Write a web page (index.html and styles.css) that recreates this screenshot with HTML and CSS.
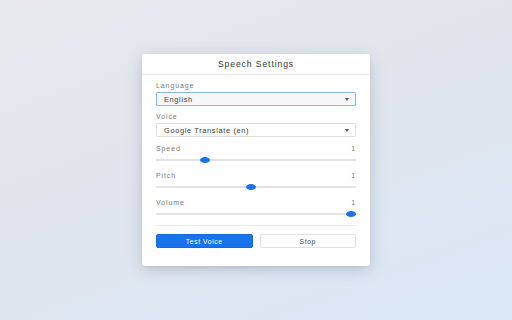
FILE: index.html
```html
<!DOCTYPE html>
<html>
<head>
<meta charset="utf-8">
<link rel="stylesheet" href="styles.css">
</head>
<body>
<div class="stage">
  <div class="card">
    <div class="card-header">Speech Settings</div>
    <div class="card-body">
      <div class="field">
        <div class="label">Language</div>
        <div class="select focused"><span>English</span><span class="caret"></span></div>
      </div>
      <div class="field">
        <div class="label">Voice</div>
        <div class="select"><span>Google Translate (en)</span><span class="caret"></span></div>
      </div>
      <div class="slider-field">
        <div class="label row"><span>Speed</span><span>1</span></div>
        <div class="track"><div class="thumb" style="left: 22%"></div></div>
      </div>
      <div class="slider-field">
        <div class="label row"><span>Pitch</span><span>1</span></div>
        <div class="track"><div class="thumb" style="left: 45%"></div></div>
      </div>
      <div class="slider-field">
        <div class="label row"><span>Volume</span><span>1</span></div>
        <div class="track"><div class="thumb" style="left: 95%"></div></div>
      </div>
      <div class="actions">
        <button class="btn primary">Test Voice</button>
        <button class="btn">Stop</button>
      </div>
    </div>
  </div>
</div>
</body>
</html>
```

FILE: styles.css
```css
html, body {
  margin: 0;
  padding: 0;
}
body {
  width: 512px;
  height: 320px;
  overflow: hidden;
  font-family: "Liberation Sans", Arial, sans-serif;
  background: linear-gradient(160deg, #e6e8ec 0%, #e0e6ee 50%, #dce8f8 100%);
}
.stage {
  width: 512px;
  height: 320px;
  display: flex;
  align-items: center;
  justify-content: center;
}
.card {
  width: 228px;
  height: 212px;
  background: #fff;
  border-radius: 2px;
  box-shadow: 0 4px 16px rgba(60, 70, 90, 0.22), 0 1px 3px rgba(0, 0, 0, 0.08);
  display: flex;
  flex-direction: column;
}
.card-header {
  height: 20px;
  line-height: 21px;
  text-align: center;
  font-size: 8.6px;
  letter-spacing: 0.9px;
  color: #333;
  border-bottom: 1px solid #ececec;
}
.card-body {
  padding: 6px 14px 0;
  display: flex;
  flex-direction: column;
}
.label {
  height: 10px;
  line-height: 10px;
  font-size: 7px;
  letter-spacing: 0.9px;
  color: #777;
}
.row {
  display: flex;
  justify-content: space-between;
}
.field {
  display: flex;
  flex-direction: column;
  gap: 1px;
  margin-bottom: 6px;
}
.field + .field {
  margin-bottom: 7px;
}
.select {
  height: 14px;
  box-sizing: border-box;
  border: 1px solid #e0e0e0;
  border-radius: 1px;
  padding: 0 6px 0 7px;
  display: flex;
  align-items: center;
  justify-content: space-between;
  font-size: 7.4px;
  letter-spacing: 0.65px;
  color: #3a3a3a;
  background: #fff;
}
.select.focused {
  border-color: #8fb3e6;
  background: #f6f7f9;
}
.caret {
  width: 0;
  height: 0;
  border-left: 2.5px solid transparent;
  border-right: 2.5px solid transparent;
  border-top: 3px solid #555;
}
.slider-field {
  display: flex;
  flex-direction: column;
  height: 27px;
}
.track {
  position: relative;
  margin-top: 5px;
  height: 2px;
  background: #e2e2e2;
  border-radius: 1px;
}
.thumb {
  position: absolute;
  top: -2px;
  width: 10px;
  height: 6px;
  border-radius: 50%;
  background: #1a73e8;
}
.actions {
  margin-top: 0;
  border-top: 1px solid #ececec;
  padding-top: 8px;
  display: flex;
  gap: 7px;
}
.btn {
  flex: 1;
  height: 14px;
  margin: 0;
  padding: 0;
  font-family: inherit;
  font-size: 6.8px;
  letter-spacing: 0.6px;
  border: 1px solid #e0e0e0;
  border-radius: 2px;
  background: #fff;
  color: #444;
}
.btn.primary {
  background: #1a73e8;
  border-color: #1a6ad6;
  color: #fff;
}
```
